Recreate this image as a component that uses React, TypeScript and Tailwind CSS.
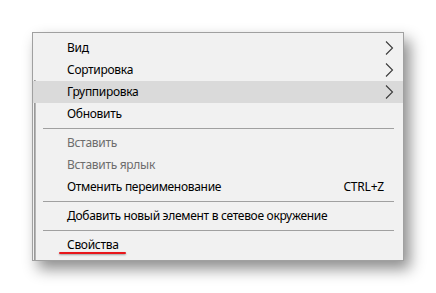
import React from "react";

const Chevron = () => (
  <svg width="9" height="14" viewBox="0 0 9 14" className="block">
    <path d="M1 0.5 L7.5 7 L1 13.5" fill="none" stroke="#3a3a3a" strokeWidth="1.1" />
  </svg>
);

type Item = { label: string; sub?: boolean; disabled?: boolean; hot?: boolean; shortcut?: string; mark?: boolean };

const Row = ({ item }: { item: Item }) => (
  <div
    className={`relative flex h-[22px] items-center pl-[34px] pr-[10px] ${item.hot ? "bg-[#dadada]" : ""}`}
  >
    <span className={`flex-1 tracking-[-0.3px] ${item.disabled ? "text-[#6d6d6d]" : "text-[#000]"}`}>{item.label}</span>
    {item.shortcut && <span className="mr-[9px] tracking-[-0.2px] text-[#000]">{item.shortcut}</span>}
    {item.sub && (
      <span className="mr-[-1px]">
        <Chevron />
      </span>
    )}
    {item.mark && (
      <div className="absolute left-[26px] top-[18px] h-[2px] w-[67px] rounded-full bg-[#e8161b] shadow-[0_1px_2px_rgba(0,0,0,0.35)]" />
    )}
  </div>
);

const Sep = () => (
  <div className="py-[3px] pl-[10px] pr-[9px]">
    <div className="h-px bg-[#a0a0a0]" />
  </div>
);

export default function App() {
  return (
    <div className="h-[293px] w-[436px] bg-white pl-[32px] pt-[32px]">
      <div
        className="relative w-[372px] border border-[#a0a0a0] bg-[#f1f1f1] py-[4px] text-[12px] leading-none shadow-[6px_8px_14px_rgba(0,0,0,0.45)]"
        style={{ fontFamily: '"Noto Sans", "Open Sans", sans-serif' }}
      >
        <div className="absolute bottom-0 left-[1px] top-[47px] w-[2px] bg-gradient-to-r from-[#8c8c8c] to-[#c4c4c4]" />
        <Row item={{ label: "Вид", sub: true }} />
        <Row item={{ label: "Сортировка", sub: true }} />
        <Row item={{ label: "Группировка", sub: true, hot: true }} />
        <Row item={{ label: "Обновить" }} />
        <Sep />
        <Row item={{ label: "Вставить", disabled: true }} />
        <Row item={{ label: "Вставить ярлык", disabled: true }} />
        <Row item={{ label: "Отменить переименование", shortcut: "CTRL+Z" }} />
        <Sep />
        <Row item={{ label: "Добавить новый элемент в сетевое окружение" }} />
        <Sep />
        <Row item={{ label: "Свойства", mark: true }} />
      </div>
    </div>
  );
}
